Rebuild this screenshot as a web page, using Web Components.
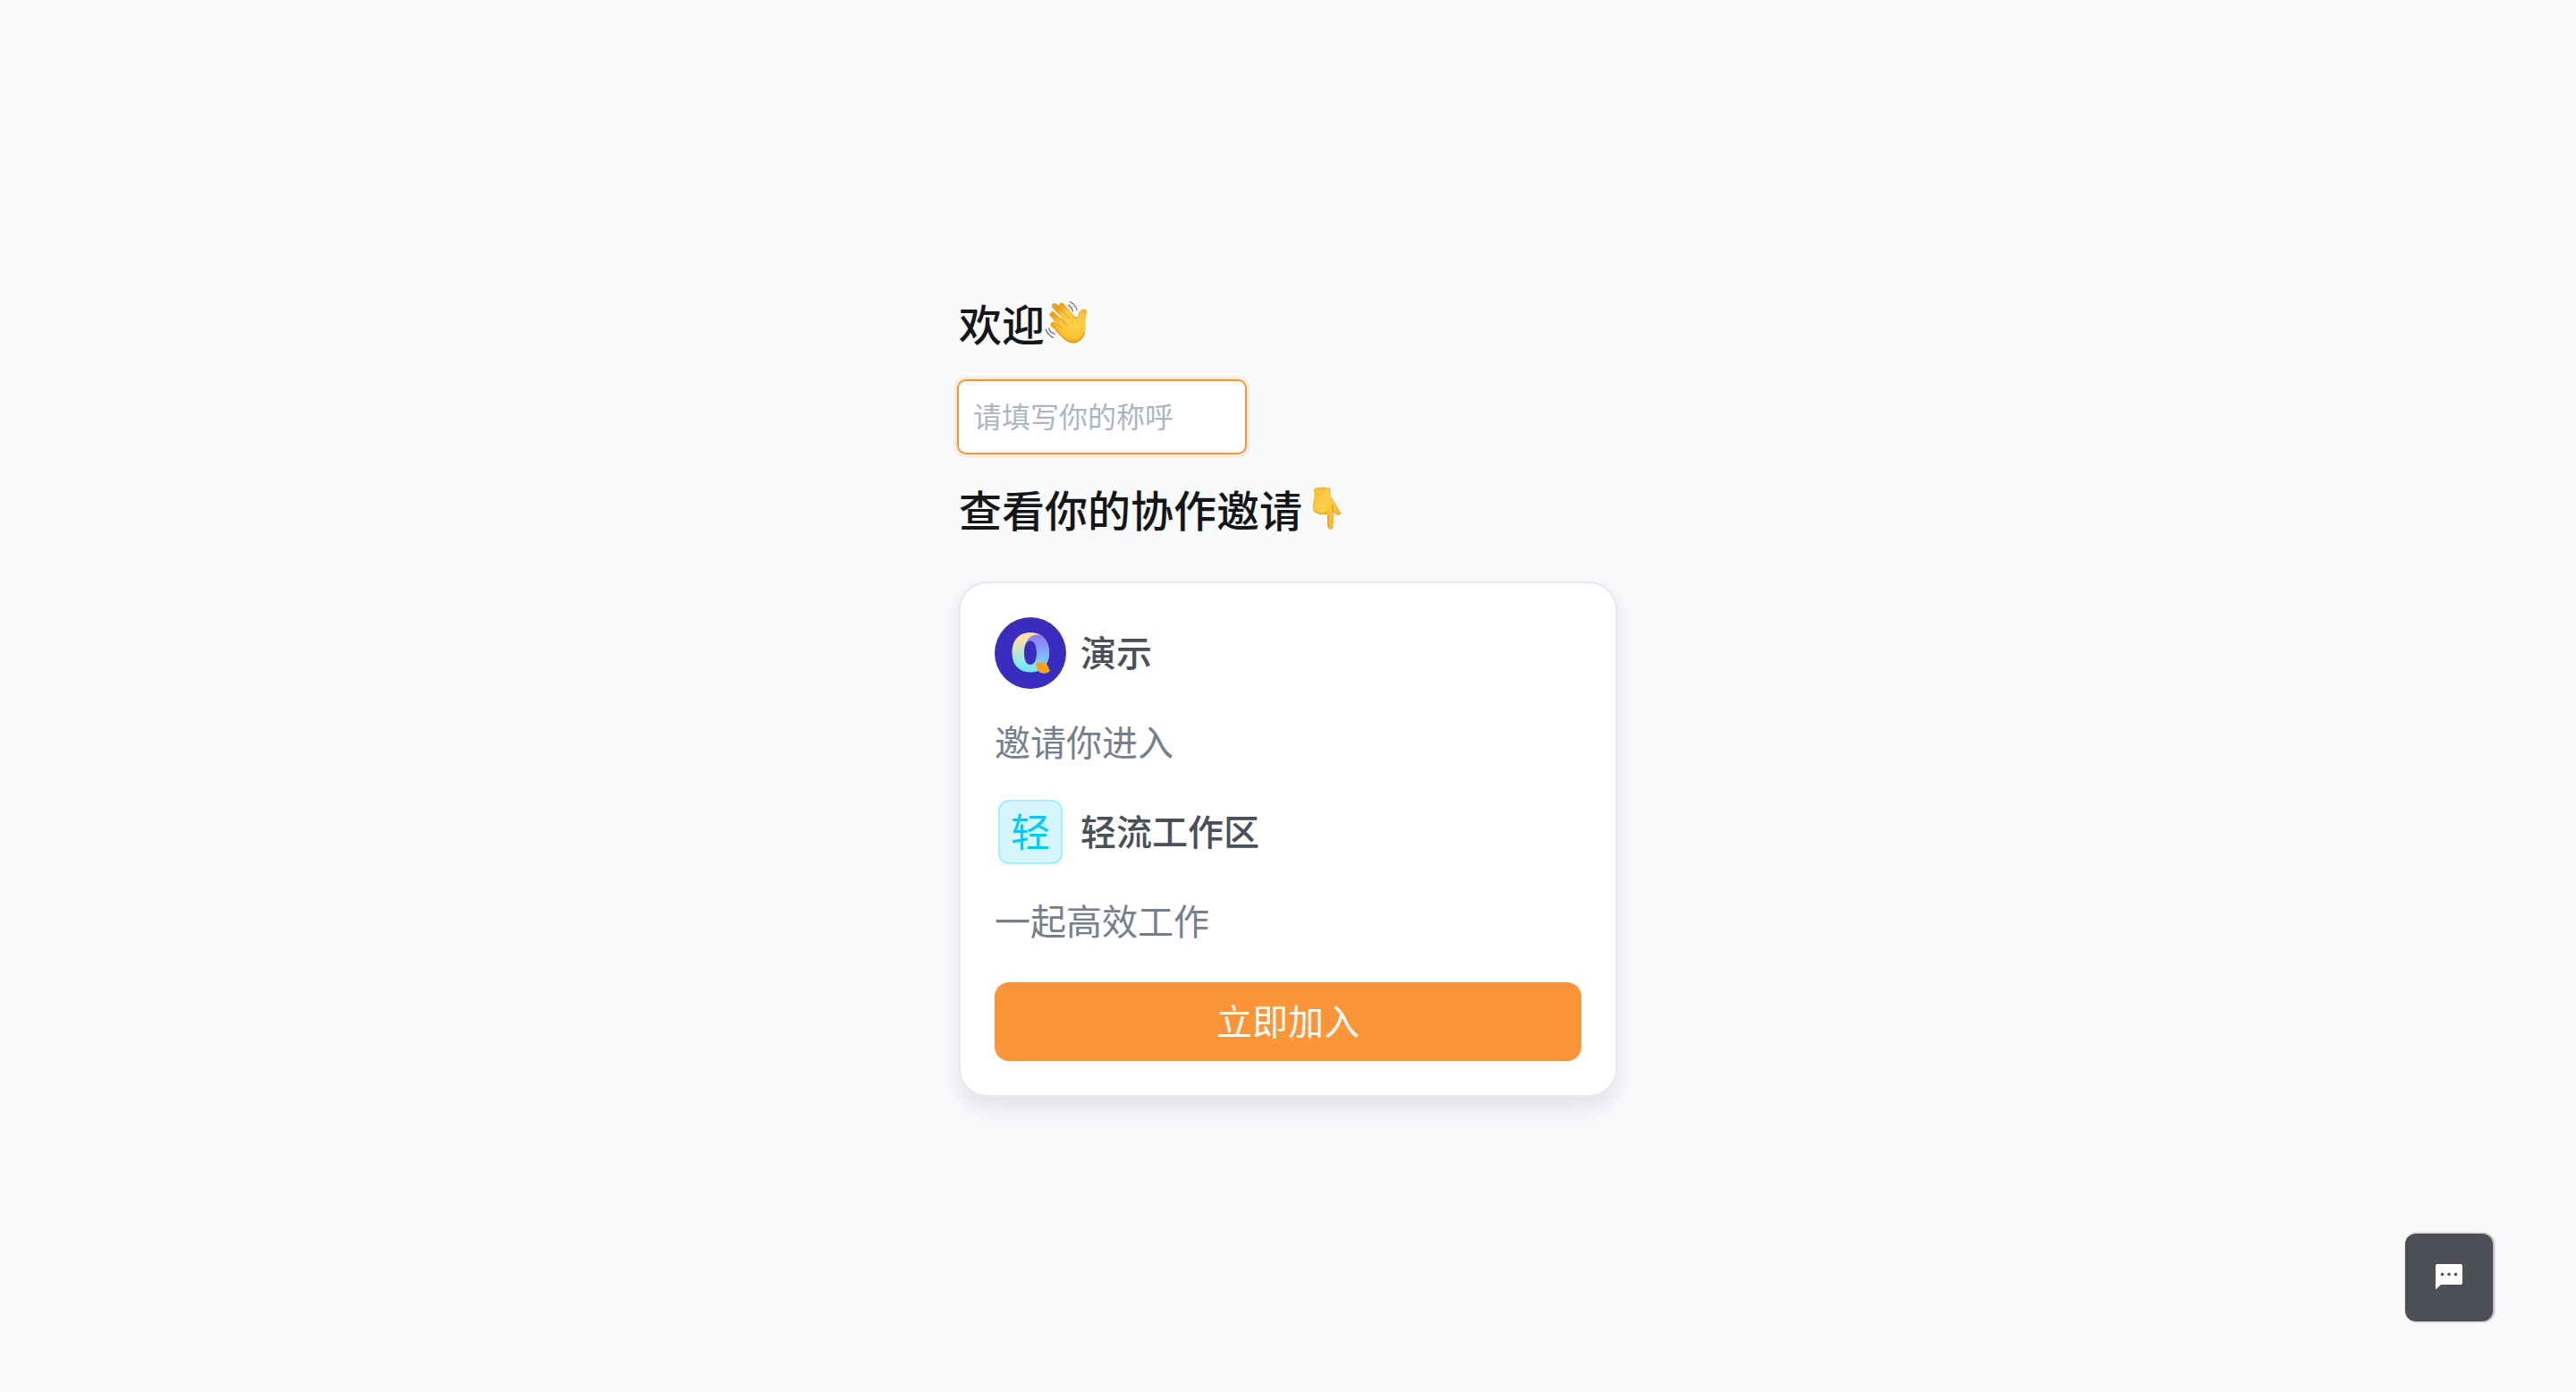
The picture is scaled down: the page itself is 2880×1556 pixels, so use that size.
<!DOCTYPE html>
<html lang="zh-CN">
<head>
<meta charset="utf-8">
<title>协作邀请</title>
<style>
    html, body { height: 100%; }
    body {
        margin: 0;
        background: #f9fafc;
        color: #141618;
        font-family: "Noto Sans CJK SC", sans-serif;
    }
</style>
</head>
<body>
<invite-page>
    <page-title>欢迎<wave-hand></wave-hand></page-title>
    <name-field placeholder="请填写你的称呼"></name-field>
    <page-title>查看你的协作邀请<point-down></point-down></page-title>
    <invite-card>
        <invite-row name="演示"><q-logo></q-logo></invite-row>
        <invite-text>邀请你进入</invite-text>
        <invite-row name="轻流工作区"><word-badge>轻</word-badge></invite-row>
        <invite-text>一起高效工作</invite-text>
        <join-button slot="action">立即加入</join-button>
    </invite-card>
    <chat-button slot="float"></chat-button>
</invite-page>

<script>
// Base for all the elements: puts the template in the shadow root
class BaseElement extends HTMLElement {
    constructor() {
        super();
        this.attachShadow({mode: 'open'});
    }

    connectedCallback() {
        const template = document.createElement('template');
        template.innerHTML = this.getStyles() + this.getTemplate();
        this.shadowRoot.replaceChildren(template.content.cloneNode(true));
    }

    getStyles() { return ''; }
    getTemplate() { return '<slot></slot>'; }
}

class InvitePage extends BaseElement {
    getStyles() {
        return `
        <style>
            :host {
                display: flex;
                align-items: center;
                justify-content: center;
                min-height: 100%;
            }
            main {
                display: flex;
                flex-direction: column;
                align-items: flex-start;
                gap: 32px;
                width: 100%;
                max-width: 736px;
            }
        </style>`;
    }

    getTemplate() {
        return `<main><slot></slot></main><slot name="float"></slot>`;
    }
}

class PageTitle extends BaseElement {
    getStyles() {
        return `
        <style>
            :host { display: block; }
            h1 {
                display: flex;
                align-items: center;
                margin: 0;
                padding-bottom: 4px;
                font-size: 48px;
                line-height: 60px;
                font-weight: 500;
            }
        </style>`;
    }

    getTemplate() {
        return `<h1><slot></slot></h1>`;
    }
}

class NameField extends BaseElement {
    getStyles() {
        return `
        <style>
            :host { display: block; }
            input {
                display: block;
                box-sizing: border-box;
                width: 320px;
                height: 80px;
                padding: 0 16px 4px;
                border: 0;
                border-radius: 8px;
                outline: 0;
                background: #fff;
                box-shadow: 0 0 0 2px #fb9337, 0 0 0 6px #fdeee5;
                color: #141618;
                font: 400 32px "Noto Sans CJK SC", sans-serif;
            }
            input::placeholder { color: #adb5bf; opacity: 1; }
        </style>`;
    }

    getTemplate() {
        const text = this.getAttribute('placeholder');
        return `<input type="text" placeholder="${text}" aria-label="${text}">`;
    }
}

class InviteCard extends BaseElement {
    getStyles() {
        return `
        <style>
            :host { display: block; width: 100%; }
            section {
                box-sizing: border-box;
                margin-top: 16px;
                padding: 38px;
                border: 2px solid #e7e9f2;
                border-radius: 32px;
                background: #fff;
                box-shadow: 0 12px 24px rgba(30, 30, 80, 0.11);
            }
            .list { display: flex; flex-direction: column; gap: 30px; }
            .action { margin-top: 38px; }
        </style>`;
    }

    getTemplate() {
        return `
        <section>
            <div class="list"><slot></slot></div>
            <div class="action"><slot name="action"></slot></div>
        </section>`;
    }
}

class InviteRow extends BaseElement {
    getStyles() {
        return `
        <style>
            :host { display: flex; align-items: center; gap: 16px; }
            .avatar {
                display: flex;
                align-items: center;
                justify-content: center;
                width: 80px;
                height: 80px;
            }
            strong {
                padding-bottom: 4px;
                color: #495059;
                font-size: 40px;
                line-height: 56px;
                font-weight: 500;
            }
        </style>`;
    }

    getTemplate() {
        return `
        <div class="avatar"><slot></slot></div>
        <strong>${this.getAttribute('name')}</strong>`;
    }
}

class InviteText extends BaseElement {
    getStyles() {
        return `
        <style>
            :host { display: block; }
            p {
                margin: 0;
                padding-bottom: 4px;
                color: #75808c;
                font-size: 40px;
                line-height: 56px;
                font-weight: 400;
            }
        </style>`;
    }

    getTemplate() {
        return `<p><slot></slot></p>`;
    }
}

class WordBadge extends BaseElement {
    getStyles() {
        return `
        <style>
            :host {
                display: flex;
                align-items: center;
                justify-content: center;
                box-sizing: border-box;
                width: 72px;
                height: 72px;
                padding-bottom: 4px;
                border: 2px solid #a6ecff;
                border-radius: 12px;
                background: #d5f6fd;
                color: #00c8ff;
                font-size: 44px;
                line-height: 56px;
                font-weight: 400;
            }
        </style>`;
    }
}

class JoinButton extends BaseElement {
    getStyles() {
        return `
        <style>
            :host { display: block; }
            button {
                display: block;
                width: 100%;
                height: 88px;
                padding: 0 0 4px;
                border: 0;
                border-radius: 16px;
                background: #fc9537;
                color: #fff;
                font: 400 40px "Noto Sans CJK SC", sans-serif;
                cursor: pointer;
            }
        </style>`;
    }

    getTemplate() {
        return `<button type="button"><slot></slot></button>`;
    }
}

class QLogo extends BaseElement {
    getStyles() {
        return `
        <style>
            :host { display: block; width: 80px; height: 80px; }
            svg { display: block; }
        </style>`;
    }

    getTemplate() {
        return `
        <svg width="80" height="80" viewBox="0 0 80 80" aria-hidden="true">
            <defs>
                <linearGradient id="left" x1="0" y1="0" x2="0" y2="1">
                    <stop offset="0" stop-color="#ffdf9e"/>
                    <stop offset="0.2" stop-color="#f8e0a6"/>
                    <stop offset="0.75" stop-color="#8ce8ee"/>
                    <stop offset="1" stop-color="#74e3ff"/>
                </linearGradient>
                <linearGradient id="right" x1="0" y1="0" x2="0" y2="1">
                    <stop offset="0" stop-color="#8b7cfb"/>
                    <stop offset="0.3" stop-color="#8790fd"/>
                    <stop offset="1" stop-color="#74deff"/>
                </linearGradient>
                <linearGradient id="leaf" x1="0" y1="0" x2="1" y2="0">
                    <stop offset="0" stop-color="#ff9b32"/>
                    <stop offset="1" stop-color="#ffab08"/>
                </linearGradient>
            </defs>
            <circle cx="40" cy="40" r="40" fill="#392dc0"/>
            <path fill="url(#left)" fill-rule="evenodd" d="M40 17C27 17 19.500 26 19.500 39.500S27 61.500 40 61.500S61 53 61 39.500S53 17 40 17ZM40 26C44.500 26 47 31 47 39.500S44.500 53 40 53S33 48 33 39.500S35.500 26 40 26Z"/>
            <path fill="url(#right)" d="M34.500 31C36 23 43 18 51 20C57.500 23 61 30 61 39.500C61 46 59 51 56 55L46 50C47 47 47 43 47 39.500C47 31 44.500 26 40 26C37.500 26 35.500 28 34.500 31Z"/>
            <path fill="url(#leaf)" d="M45 53C48 49.500 56 48.500 59 53.500C60 55.500 60.500 58 62 59.500C59 64 50.500 64 47.800 58.500C47 56.500 46.500 54.500 45 53Z"/>
        </svg>`;
    }
}

class WaveHand extends BaseElement {
    getStyles() {
        return `
        <style>
            :host { display: block; padding-top: 4px; }
            svg { display: block; }
        </style>`;
    }

    getTemplate() {
        return `
        <svg width="48" height="52" viewBox="0 0 48 52" role="img" aria-label="挥手">
            <defs>
                <radialGradient id="skin" gradientUnits="userSpaceOnUse" cx="32" cy="25" r="23">
                    <stop offset="0" stop-color="#ffd04c"/>
                    <stop offset="0.65" stop-color="#fdc638"/>
                    <stop offset="1" stop-color="#eea31d"/>
                </radialGradient>
            </defs>
            <g fill="none" stroke="url(#skin)" stroke-linecap="round" stroke-width="6">
                <path d="M19 5.500L34 22"/>
                <path d="M11 6L29 26"/>
                <path d="M8.500 15.500L26 32"/>
                <path d="M9.500 27L26 39"/>
            </g>
            <path fill="url(#skin)" d="M21 15L34 19C37 20 38 18 38.300 14C38.500 10 43 8.500 46 10C49 11.500 45.500 16 45.600 22C45.800 29 46.200 34 43.500 40C40 47 32 49.500 26 46C21 43 16 38 11 32Z"/>
            <g fill="none" stroke="#dc8d17" stroke-linecap="round" stroke-width="1">
                <path d="M13.500 4.500L28 20.500"/>
                <path d="M8.500 12.500L25 27.500"/>
                <path d="M9.500 22L20 31.500"/>
                <path d="M31 17.500C35 20.500 38 20 38.500 15"/>
                <path d="M13 33.500C20 41 23 45.500 30 46.500C37 47 42.500 43 44.500 36"/>
            </g>
            <g fill="none" stroke="#686b6e" stroke-linecap="round" stroke-width="1.200">
                <path d="M28.500 1.500C33 3.500 35 7 36 10.500"/>
                <path d="M26.500 5C29.500 7 31 9 31.500 12"/>
                <path d="M1 32C3 37 6 40 10 41.500"/>
                <path d="M4.500 31C6 34.500 8 36.500 11.500 37.500"/>
            </g>
        </svg>`;
    }
}

class PointDown extends BaseElement {
    getStyles() {
        return `
        <style>
            :host { display: block; padding-top: 4px; }
            svg { display: block; }
        </style>`;
    }

    getTemplate() {
        return `
        <svg width="56" height="52" viewBox="0 0 56 52" role="img" aria-label="向下指">
            <defs>
                <linearGradient id="skin" x1="0" y1="0" x2="1" y2="1">
                    <stop offset="0" stop-color="#f9b928"/>
                    <stop offset="0.4" stop-color="#ffd047"/>
                    <stop offset="1" stop-color="#f4ac20"/>
                </linearGradient>
            </defs>
            <path fill="url(#skin)" stroke="#eaa423" stroke-width="0.800" d="M13.500 2.500C18 .5 27 .5 31 2.500C30.800 6 30.500 9 32 11.500C36 16.500 38.500 24 42.500 29C43.500 31 41 32.500 39 31L34.500 27.500L34 45C34 48.500 29 48.500 29 45L28 29C27 31 24 31.500 22.500 30C20 31.500 18 30.500 17 29C13 28.500 12 25.500 12.300 22C12.500 17 14 13 14 10C14 7 13.500 5 13.500 2.500Z"/>
            <g fill="none" stroke="#da8c19" stroke-linecap="round" stroke-width="1">
                <path d="M13 26.500C14.500 29 16.500 29.500 18 28.500C19.500 31 22 31 23 29.500C25 31 27.500 30.500 28.300 27.500"/>
                <path d="M33.500 21L34.500 27.500L39 31"/>
                <path d="M29 32V45"/>
            </g>
        </svg>`;
    }
}

class ChatButton extends BaseElement {
    getStyles() {
        return `
        <style>
            :host { position: fixed; right: 93px; bottom: 79px; }
            button {
                display: flex;
                align-items: center;
                justify-content: center;
                width: 98px;
                height: 98px;
                padding: 0 0 2px;
                border: 0;
                border-radius: 12px;
                background: #4c4f56;
                box-shadow: 1px 0 2px 1px rgba(60, 50, 55, 0.35);
                cursor: pointer;
            }
        </style>`;
    }

    getTemplate() {
        return `
        <button type="button" aria-label="在线客服">
            <svg width="32" height="30" viewBox="0 0 32 30" aria-hidden="true">
                <path fill="#fff" d="M3 1H29Q31 1 31 3V22Q31 24 29 24H7L1 29.500V3Q1 1 3 1Z"/>
                <g fill="#4c4f56">
                    <circle cx="8.500" cy="12.500" r="1.800"/>
                    <circle cx="16" cy="12.500" r="1.800"/>
                    <circle cx="23.500" cy="12.500" r="1.800"/>
                </g>
            </svg>
        </button>`;
    }
}

customElements.define('invite-page', InvitePage);
customElements.define('page-title', PageTitle);
customElements.define('name-field', NameField);
customElements.define('invite-card', InviteCard);
customElements.define('invite-row', InviteRow);
customElements.define('invite-text', InviteText);
customElements.define('word-badge', WordBadge);
customElements.define('join-button', JoinButton);
customElements.define('q-logo', QLogo);
customElements.define('wave-hand', WaveHand);
customElements.define('point-down', PointDown);
customElements.define('chat-button', ChatButton);
</script>
</body>
</html>
